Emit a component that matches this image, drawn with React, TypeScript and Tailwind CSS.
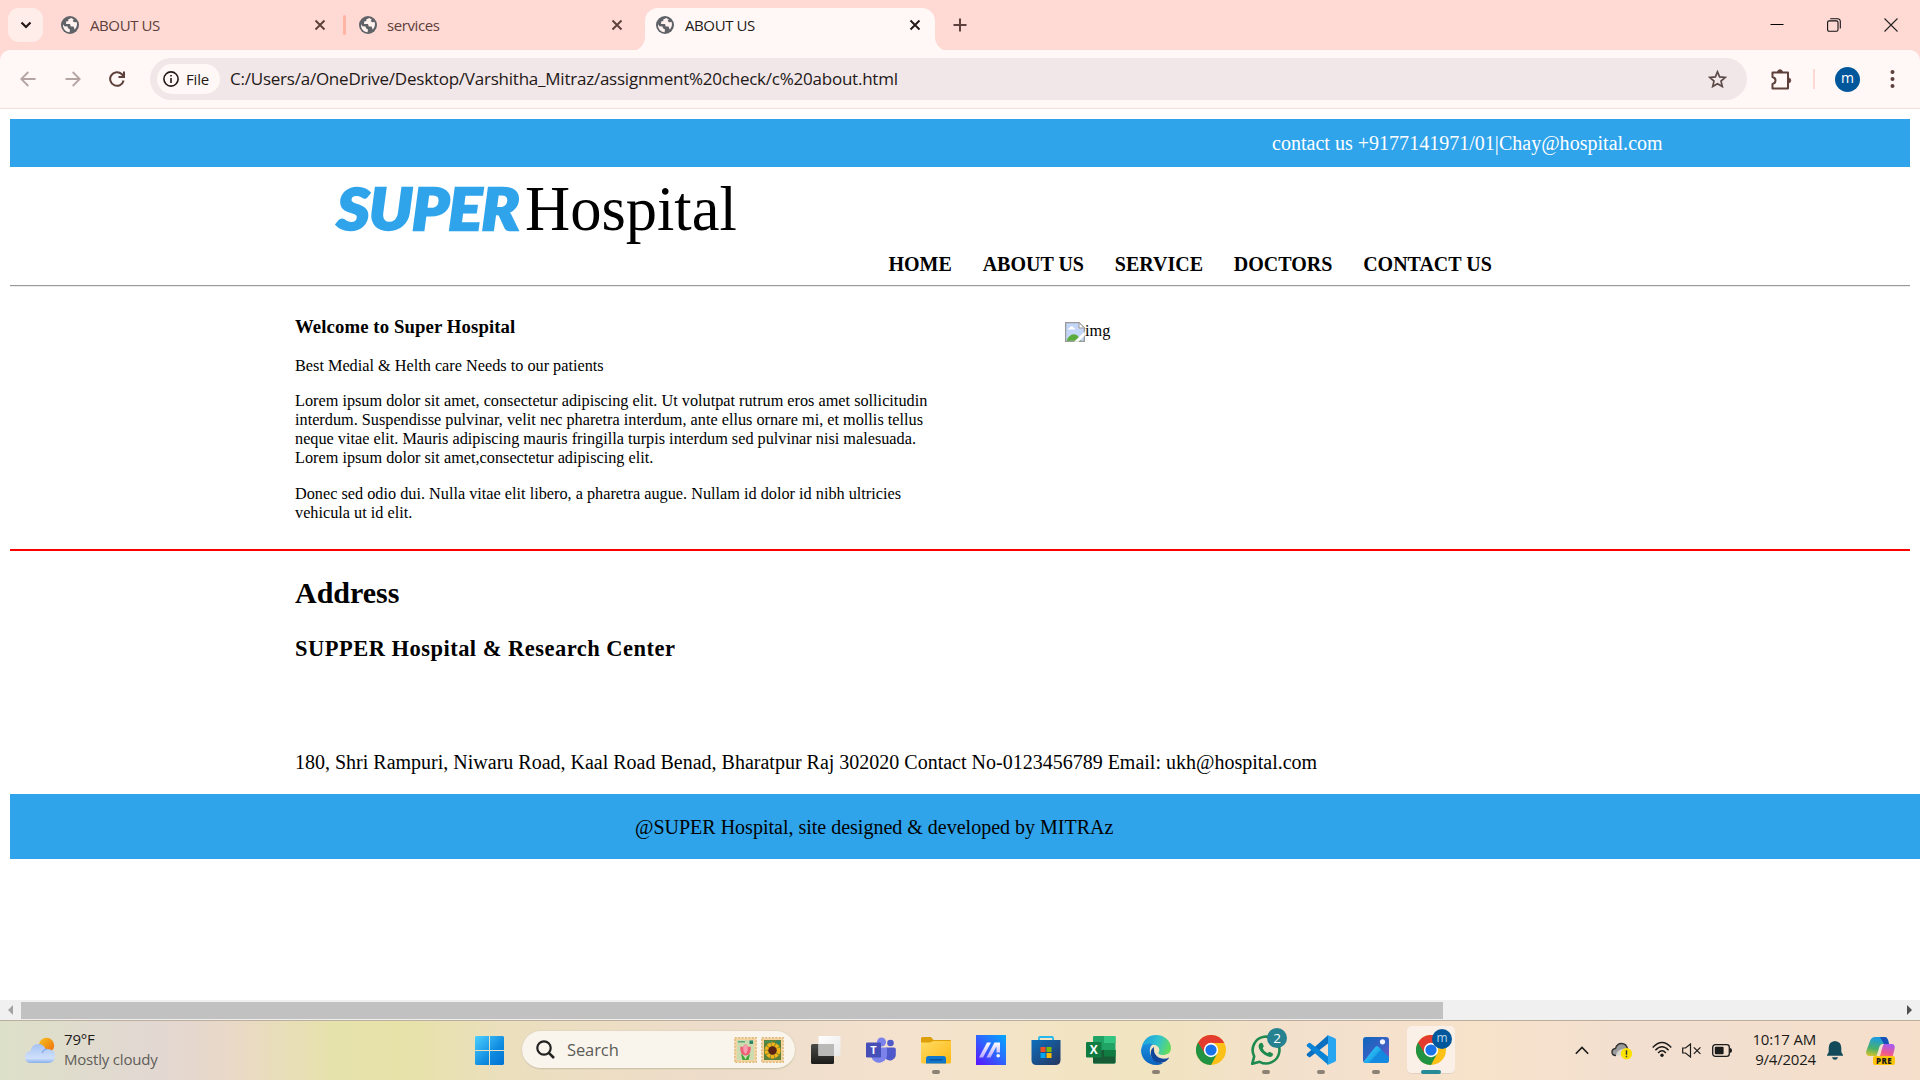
import React from "react";

function Globe() {
  return (
    <svg className="size-[18px] shrink-0" viewBox="0 0 18 18">
      <circle cx="9" cy="9" r="9" fill="#5f6368" />
      <path d="M2 8.2 C1.6 12.5 4.5 16 8.6 16.3 L9 13.6 L7 12.3 L6.6 10.6 L3.4 10.2 Z" fill="#fff2ef" />
      <path d="M10.2 1.9 L7.2 3.4 L7.4 5 L5.2 5.6 L5 8 L9 8.1 L9.8 10.4 L12.6 10.6 L13.6 13.4 C15.6 11.8 16.6 8.6 15.6 6 L13.2 6.2 L11.6 5 L12.8 3.4 Z" fill="#fff2ef" />
    </svg>
  );
}

function TabClose({ dark }: { dark?: boolean }) {
  return (
    <svg className="size-[12px] shrink-0" viewBox="0 0 12 12" fill="none" stroke={dark ? "#231917" : "#5d403b"} strokeWidth="1.9">
      <path d="M1.5 1.5 L10.5 10.5 M10.5 1.5 L1.5 10.5" />
    </svg>
  );
}

function TabStrip() {
  return (
    <div className="flex h-[50px] bg-[#ffdad4]">
      <div className="mt-2 ml-2 flex h-[34px] w-[35px] items-center justify-center rounded-[11px] bg-[#ffedea]">
        <svg className="h-[8px] w-[12px]" viewBox="0 0 12 8" fill="none" stroke="#231917" strokeWidth="2.2">
          <path d="M1.5 1.5 L6 6 L10.5 1.5" />
        </svg>
      </div>
      <div className="flex h-[50px] w-[303px] items-center pl-[18px]">
        <Globe />
        <span className="ml-[11px] w-[224px] shrink-0 text-[15px] tracking-[-0.4px] text-[#5d403b]">ABOUT US</span>
        <TabClose />
        <span className="ml-[17px] h-5 w-[3px] shrink-0 rounded bg-[#ffb4a6]" />
      </div>
      <div className="flex h-[50px] w-[299px] items-center pl-[13px]">
        <Globe />
        <span className="ml-[10px] w-[224px] text-[15px] tracking-[-0.4px] text-[#5d403b]">services</span>
        <TabClose />
      </div>
      <div className="relative mt-[7.5px] flex h-[43px] w-[290px] items-center rounded-t-[13px] bg-[#fff8f6] pl-[11px]">
        <svg className="absolute bottom-0 left-[-14px] size-[14px]" viewBox="0 0 14 14">
          <path d="M14 0 A14 14 0 0 1 0 14 H14Z" fill="#fff8f6" />
        </svg>
        <svg className="absolute right-[-14px] bottom-0 size-[14px]" viewBox="0 0 14 14">
          <path d="M0 0 A14 14 0 0 0 14 14 H0Z" fill="#fff8f6" />
        </svg>
        <div className="mb-2 flex items-center">
          <Globe />
          <span className="ml-[11px] w-[224px] text-[15px] tracking-[-0.4px] text-[#231917]">ABOUT US</span>
          <TabClose dark />
        </div>
      </div>
      <svg className="mt-[18px] ml-[18px] size-[14px]" viewBox="0 0 14 14" stroke="#5d403b" strokeWidth="2">
        <path d="M7 0.5 V13.5 M0.5 7 H13.5" />
      </svg>
      <div className="mr-[22px] ml-auto flex h-[50px] items-center gap-[43px]">
        <svg className="h-[14px] w-[14px]" viewBox="0 0 14 14" stroke="#000">
          <path d="M0.5 6.5 H13.5" />
        </svg>
        <svg className="h-[14px] w-[14px]" viewBox="0 0 14 14" fill="none" stroke="#111" strokeWidth="1.1">
          <rect x="0.6" y="2.9" width="10.4" height="10.4" rx="1.5" />
          <path d="M3.2 0.7 H10.5 A2.7 2.7 0 0 1 13.3 3.4 V10.5" />
        </svg>
        <svg className="h-[14px] w-[14px]" viewBox="0 0 14 14" stroke="#222" strokeWidth="1.1">
          <path d="M0.5 0.5 L13.5 13.5 M13.5 0.5 L0.5 13.5" />
        </svg>
      </div>
    </div>
  );
}

function Toolbar() {
  return (
    <div className="h-[59px] bg-[#ffdad4]">
      <div className="flex h-[59px] items-center rounded-t-[10px] border-b border-[#f8dcd8] bg-[#fff8f6]">
        <svg className="ml-5 size-4" viewBox="0 0 16 16" fill="none" stroke="#b5a5a2" strokeWidth="1.8">
          <path d="M15.5 8 H1.5 M8.3 1 L1.3 8 L8.3 15" />
        </svg>
        <svg className="ml-[29px] size-4" viewBox="0 0 16 16" fill="none" stroke="#b5a5a2" strokeWidth="1.8">
          <path d="M0.5 8 H14.5 M7.7 1 L14.7 8 L7.7 15" />
        </svg>
        <svg className="ml-[28px] size-4" viewBox="0 0 16 16" fill="none" stroke="#5d403b" strokeWidth="2">
          <path d="M14.6 9.5 A6.8 6.8 0 1 1 12.9 3.3 L14.3 4.8 M15 0.5 V6 H9.5" />
        </svg>
        <div className="ml-[25px] flex h-[42px] w-[1597px] items-center rounded-full bg-[#f1e6e8] pl-[7px]">
          <div className="flex h-[30px] w-[63px] items-center rounded-full bg-[#fff8f6] pl-[6px]">
            <svg className="size-4" viewBox="0 0 16 16" fill="none" stroke="#231917" strokeWidth="1.6">
              <circle cx="8" cy="8" r="7.1" />
              <path d="M8 7 V12 M8 4 V5.6" />
            </svg>
            <span className="ml-[7px] text-[15px] font-medium tracking-[-0.15px] text-[#231917]">File</span>
          </div>
          <span className="ml-[10px] text-[17px] tracking-[-0.23px] whitespace-nowrap text-[#231917]">
            C:/Users/a/OneDrive/Desktop/Varshitha_Mitraz/assignment%20check/c%20about.html
          </span>
          <svg className="mr-5 ml-auto size-[19px]" viewBox="0 0 19 19" fill="none" stroke="#5b4a48" strokeWidth="1.7">
            <path d="M9.5 1.8 L11.6 6.9 L17.2 7.4 L13 11.1 L14.3 16.6 L9.5 13.7 L4.7 16.6 L6 11.1 L1.8 7.4 L7.4 6.9 Z" />
          </svg>
        </div>
        <svg className="ml-6 h-[21px] w-[21px]" viewBox="0 0 21 21" fill="none" stroke="#5d403b" strokeWidth="2" strokeLinejoin="round">
          <path d="M1.5 3.5 H17 V19.5 H1.5 V15 C5.5 14 5.5 9 1.5 8 Z" />
          <path d="M6.5 3 A2.5 2.3 0 0 1 11.5 3 Z M17.5 9 A2.3 2.5 0 0 1 17.5 14 Z" fill="#5d403b" strokeWidth="0.8" />
        </svg>
        <span className="ml-[21px] h-5 w-[2px] bg-[#ffdad4]" />
        <span className="ml-5 flex size-[25px] items-center justify-center rounded-full bg-[#01579b] pb-[3px] text-[14px] text-white">m</span>
        <svg className="ml-[30px] h-[18px] w-[5px]" viewBox="0 0 5 18" fill="#5d403b">
          <circle cx="2.5" cy="2" r="2" />
          <circle cx="2.5" cy="9" r="2" />
          <circle cx="2.5" cy="16" r="2" />
        </svg>
      </div>
    </div>
  );
}

function BrokenImage() {
  return (
    <svg className="h-5 w-5" viewBox="0 0 20 20">
      <path d="M0.6 0.6 H14 L19.4 6 V19.4 H0.6 Z" fill="#c3d6f8" stroke="#9a9a9a" strokeWidth="1.3" />
      <path d="M14 0.6 V6 H19.4 Z" fill="#fff" stroke="#9a9a9a" />
      <path d="M3 7.5 Q3 5.8 5 5.6 Q6.5 2.8 8.6 5.4 Q10.3 5.8 10.3 7.5 Z" fill="#fff" />
      <path d="M1.5 18.8 Q5.5 9.5 12.5 13.5 L16 18.8 Z" fill="#5bab3c" />
      <path d="M9 19.8 L19.8 9.6 V13.6 L13.4 19.8 Z" fill="#fff" />
    </svg>
  );
}

const navItems = ["HOME", "ABOUT US", "SERVICE", "DOCTORS", "CONTACT US"];

function HospitalPage() {
  return (
    <div className="h-[891px] overflow-hidden bg-white pt-[10px] pl-[10px] font-['Liberation_Serif',serif] text-black">
      <div className="flex h-12 w-[1900px] items-center bg-[#2fa4eb] pl-[1262px] text-[20px] tracking-[0.02px] text-white">
        <span className="whitespace-nowrap">contact us +9177141971/01|Chay@hospital.com</span>
      </div>
      <div className="flex h-[84px] items-baseline pl-[327px] text-[62.5px] leading-[82px]">
        <span className="w-[188px] origin-left scale-x-110 font-['Forte','Lato',cursive] text-[57px] font-black tracking-[-0.5px] text-[#2fa4eb] italic [-webkit-text-stroke:2.5px_#2fa4eb] [stroke-linejoin:round]">SUPER</span>
        <span>Hospital</span>
      </div>
      <nav className="flex h-[35px] w-[1900px] gap-[30.8px] border-b border-[#999] pl-[878.5px] text-[20px] leading-[26px] font-bold">
        {navItems.map((n) => (
          <span key={n} className="whitespace-nowrap">{n}</span>
        ))}
      </nav>
      <div className="h-px w-[1900px] bg-[#ededed]" />
      <div className="flex h-[264px] w-[1900px] border-b-2 border-[#f00] pl-[285px]">
        <div className="w-[770px] text-[16.25px] leading-[19px] whitespace-nowrap">
          <h3 className="pt-[29px] text-[18.75px] leading-[22px] font-bold tracking-[0.1px]">Welcome to Super Hospital</h3>
          <p className="mt-[19px]">Best Medial &amp; Helth care Needs to our patients</p>
          <p className="mt-4">
            Lorem ipsum dolor sit amet, consectetur adipiscing elit. Ut volutpat rutrum eros amet sollicitudin<br />
            interdum. Suspendisse pulvinar, velit nec pharetra interdum, ante ellus ornare mi, et mollis tellus<br />
            neque vitae elit. Mauris adipiscing mauris fringilla turpis interdum sed pulvinar nisi malesuada.<br />
            Lorem ipsum dolor sit amet,consectetur adipiscing elit.
          </p>
          <p className="mt-[17px]">
            Donec sed odio dui. Nulla vitae elit libero, a pharetra augue. Nullam id dolor id nibh ultricies<br />
            vehicula ut id elit.
          </p>
        </div>
        <div className="flex h-5 pt-[35px] text-[16.25px] leading-[19px]">
          <BrokenImage />
          <span>img</span>
        </div>
      </div>
      <div className="h-[243px] pl-[285px] whitespace-nowrap">
        <h2 className="pt-[24px] text-[30px] leading-[35px] font-bold">Address</h2>
        <h3 className="mt-[26px] text-[22.5px] leading-[26px] font-bold tracking-[0.48px]">SUPPER Hospital &amp; Research Center</h3>
        <p className="mt-[89px] text-[20px] leading-[23px]">
          180, Shri Rampuri, Niwaru Road, Kaal Road Benad, Bharatpur Raj 302020 Contact No-0123456789 Email: ukh@hospital.com
        </p>
      </div>
      <div className="flex h-[65px] items-center bg-[#2fa4eb] pl-[625px] text-[20px]">
        <span>@SUPER Hospital, site designed &amp; developed by MITRAz</span>
      </div>
    </div>
  );
}

function HorizontalScrollbar() {
  return (
    <div className="flex h-[21px] items-center border-b border-[#bcae9c] bg-[#f0f0f0]">
      <svg className="ml-2 h-[10px] w-[5px]" viewBox="0 0 5 10"><path d="M5 0 V10 L0 5Z" fill="#a3a3a3" /></svg>
      <div className="ml-2 h-[17px] w-[1422px] bg-[#c1c1c1]" />
      <svg className="mr-2 ml-auto h-[10px] w-[5px]" viewBox="0 0 5 10"><path d="M0 0 V10 L5 5Z" fill="#505050" /></svg>
    </div>
  );
}

function ChromeLogo() {
  return (
    <svg className="size-[30px]" viewBox="0 0 30 30">
      <circle cx="15" cy="15" r="15" fill="#fbc116" />
      <path d="M15 15 L2 7.5 A15 15 0 0 0 15 30 L21.2 18.6 Z" fill="#229342" />
      <path d="M15 8 H28.3 A15 15 0 0 0 2 7.5 L8.8 18.5 Z" fill="#e33b2e" />
      <circle cx="15" cy="15" r="7.2" fill="#fff" />
      <circle cx="15" cy="15" r="5.6" fill="#1a73e8" />
    </svg>
  );
}

function TaskViewIcon() {
  return (
    <svg className="size-[30px]" viewBox="0 0 30 30">
      <defs>
        <linearGradient id="tvDark" x1="0" y1="0" x2="0" y2="1"><stop offset="0" stopColor="#4a4a48" /><stop offset="1" stopColor="#1c1c1a" /></linearGradient>
        <linearGradient id="tvLight" x1="0" y1="0" x2="1" y2="1"><stop offset="0" stopColor="#fff" /><stop offset="1" stopColor="#e8e8e8" /></linearGradient>
      </defs>
      <rect x="0" y="9" width="23" height="20" rx="1.5" fill="url(#tvDark)" />
      <rect x="7.5" y="1" width="22" height="20" rx="1" fill="url(#tvLight)" />
      <path d="M7.5 9 H23 V21 H7.5Z" fill="#b9b9b8" />
    </svg>
  );
}

function TeamsIcon() {
  return (
    <svg className="size-[30px]" viewBox="0 0 30 30">
      <circle cx="24.5" cy="8" r="3.3" fill="#5059c9" />
      <path d="M20 12.5 H28 Q29.8 12.5 29.8 14.3 V20 A6 6 0 0 1 20 24Z" fill="#5059c9" />
      <circle cx="15.5" cy="7" r="4.5" fill="#7b83eb" />
      <path d="M8 12.5 H21 V20.5 A8 8 0 0 1 5.5 22.5Z" fill="#7b83eb" />
      <rect x="0" y="7.5" width="15" height="15" rx="1.3" fill="#464eb8" />
      <text x="7.5" y="19" textAnchor="middle" fontFamily="Open Sans" fontWeight="700" fontSize="11" fill="#fff">T</text>
    </svg>
  );
}

function FolderIcon() {
  return (
    <svg className="size-[30px]" viewBox="0 0 30 30">
      <defs><linearGradient id="fld" x1="0" y1="0" x2="1" y2="1"><stop offset="0" stopColor="#ffdc63" /><stop offset="1" stopColor="#fdb813" /></linearGradient></defs>
      <path d="M0 3.5 Q0 2 1.5 2 H10 L12.5 5 H29 Q30 5 30 6 V9 H0Z" fill="#dea00a" />
      <path d="M0 7.5 H9 L12.5 6 H30 V27 Q30 28.5 28.5 28.5 H1.5 Q0 28.5 0 27Z" fill="url(#fld)" />
      <path d="M5 28.5 V23.5 Q5 21 7.5 21 H22.5 Q25 21 25 23.5 V28.5Z" fill="#1078cc" />
      <path d="M8.5 24.8 H21.5" stroke="#094f96" strokeWidth="1.3" />
    </svg>
  );
}

function AsusIcon() {
  return (
    <svg className="size-[30px]" viewBox="0 0 30 30">
      <defs>
        <linearGradient id="asus" x1="0" y1="1" x2="1" y2="0"><stop offset="0" stopColor="#5a12ff" /><stop offset="0.55" stopColor="#2a6cff" /><stop offset="1" stopColor="#00a8ff" /></linearGradient>
        <linearGradient id="asusW" x1="0" y1="1" x2="0" y2="0"><stop offset="0" stopColor="#b8a8ff" /><stop offset="1" stopColor="#fff" /></linearGradient>
      </defs>
      <rect width="30" height="30" fill="url(#asus)" />
      <path d="M3 22.5 L11 7.5 H15 L7 22.5Z M10.5 22.5 L18.5 7.5 H24 V17.5 H20.5 V11.5 L14.5 22.5Z" fill="url(#asusW)" />
      <circle cx="22.2" cy="20.8" r="1.8" fill="#fff" />
    </svg>
  );
}

function StoreIcon() {
  return (
    <svg className="size-[30px]" viewBox="0 0 30 30">
      <defs><linearGradient id="store" x1="0" y1="0" x2="1" y2="1"><stop offset="0" stopColor="#0d6fbd" /><stop offset="1" stopColor="#26355f" /></linearGradient></defs>
      <path d="M8 7 V3 Q8 2 9 2 H21 Q22 2 22 3 V7" fill="none" stroke="#25b7ee" strokeWidth="1.8" />
      <path d="M0.5 5 H29.5 V25 Q29.5 30 24.5 30 H5.5 Q0.5 30 0.5 25Z" fill="url(#store)" />
      <rect x="9.5" y="12" width="5" height="5" fill="#f25022" />
      <rect x="15.5" y="12" width="5" height="5" fill="#7fba00" />
      <rect x="9.5" y="18" width="5" height="5" fill="#00a4ef" />
      <rect x="15.5" y="18" width="5" height="5" fill="#ffb900" />
    </svg>
  );
}

function ExcelIcon() {
  return (
    <svg className="size-[30px]" viewBox="0 0 30 30">
      <rect x="7" y="1" width="22.5" height="27.5" rx="1.3" fill="#21a366" />
      <path d="M18 1 H28.2 Q29.5 1 29.5 2.3 V8 H18Z" fill="#33c481" />
      <path d="M7 15 H29.5 V27 Q29.5 28.5 28 28.5 H8.3 Q7 28.5 7 27Z" fill="#185c37" />
      <path d="M18 15 H29.5 V21.5 H18Z" fill="#107c41" />
      <rect x="0" y="7" width="15.5" height="15.5" rx="1.3" fill="#107c41" />
      <text x="7.7" y="19" textAnchor="middle" fontFamily="Open Sans" fontWeight="700" fontSize="12" fill="#fff">X</text>
    </svg>
  );
}

function EdgeIcon() {
  return (
    <svg className="size-[30px]" viewBox="0 0 30 30">
      <defs>
        <linearGradient id="edTop" x1="0" y1="0.3" x2="1" y2="0.6"><stop offset="0" stopColor="#1a9fe0" /><stop offset="0.5" stopColor="#2fc2cf" /><stop offset="1" stopColor="#66dd58" /></linearGradient>
        <linearGradient id="edLow" x1="0" y1="0" x2="0" y2="1"><stop offset="0" stopColor="#1b8fdd" /><stop offset="1" stopColor="#0b63bd" /></linearGradient>
      </defs>
      <path d="M0.5 13 C2 4.5 8 0 15 0 C24 0 30 6.5 30 13 C30 18 26 20 22 20 C18.5 20 17 18.8 17.5 17.8 C19.5 15 18 11 14 10 C9 8.5 3 10 0.5 13Z" fill="url(#edTop)" />
      <path d="M0 15 C1 9.5 7.5 7.5 12 9.2 C9 11 8 15 9.5 19.5 C11.5 25.5 17 28 22 28.3 C19 30 17 30 15 30 C6.5 30 0 23.5 0 15Z" fill="url(#edLow)" />
      <path d="M13 12 C8.5 14.5 9 21.5 12.8 25.5 C17.5 30 25.5 28 28.2 22.6 C22 25.8 11.5 22.5 13 12Z" fill="#10479a" />
    </svg>
  );
}

function WhatsAppIcon() {
  return (
    <span className="relative">
      <svg className="size-[30px]" viewBox="0 0 30 30">
        <path d="M1.2 28.8 L3.2 21.3 A13.4 13.4 0 1 1 8.6 26.8 Z" fill="none" stroke="#1f8a50" strokeWidth="2.6" strokeLinejoin="round" />
        <path d="M9 8.3 C10.3 7.2 11.3 7.6 11.8 8.8 L12.7 11 C13 12 11.6 12.8 11.8 13.4 C12.8 15.6 14.4 17.2 16.6 18 C17.3 18.2 18 16.6 18.9 16.9 L21.4 18.2 C22.6 18.9 22 20.4 21 21.3 C17.6 24 7.4 17 7.6 11.2 C7.7 10 8.2 8.9 9 8.3Z" fill="#1f8a50" />
      </svg>
      <span className="absolute top-[-7px] left-4 flex size-5 items-center justify-center rounded-full bg-[#268190] text-[13.5px] text-white">2</span>
    </span>
  );
}

function CodeIcon() {
  return (
    <svg className="size-[30px]" viewBox="0 0 30 30">
      <path d="M22 0.3 L1 18.8 Q0.2 19.6 1 20.4 L2.8 22 Q3.5 22.5 4.3 22 L22 8.5Z" fill="#0a6fc0" />
      <path d="M22 29.7 L1 11.2 Q0.2 10.4 1 9.6 L2.8 8 Q3.5 7.5 4.3 8 L22 21.5Z" fill="#0b84d8" />
      <path d="M21.5 0 L29 3.3 Q30 3.8 30 5 V25 Q30 26.2 29 26.7 L21.5 30 Q20.5 29.5 22 28 V2 Q20.5 0.5 21.5 0Z" fill="#27a5f0" />
    </svg>
  );
}

function PhotosIcon() {
  return (
    <svg className="size-[26px]" viewBox="0 0 26 26">
      <defs>
        <linearGradient id="phBg" x1="0" y1="0" x2="1" y2="1"><stop offset="0" stopColor="#0f66bd" /><stop offset="0.6" stopColor="#3d60c4" /><stop offset="1" stopColor="#8a50c4" /></linearGradient>
        <linearGradient id="phFg" x1="0" y1="0" x2="1" y2="1"><stop offset="0" stopColor="#3edbff" /><stop offset="1" stopColor="#0a84dc" /></linearGradient>
      </defs>
      <rect width="26" height="26" rx="3" fill="url(#phBg)" />
      <path d="M1 25 L12 10.5 Q14 8 16.2 10.5 L26 20 V23 Q26 26 23 26 H3 Q1.7 26 1 25Z" fill="#1389e0" />
      <path d="M0.6 24.5 L12 10.5 Q14 8 16.2 10.5 L18 12.4 L6 26 H3 Q1.2 26 0.6 24.5Z" fill="url(#phFg)" />
      <circle cx="19.5" cy="4.8" r="2.6" fill="#f4f4ff" />
    </svg>
  );
}

function Stamp({ sun }: { sun?: boolean }) {
  return (
    <svg className="h-[26px] w-[23px]" viewBox="0 0 23 26">
      <rect x="0.8" y="0.8" width="21.4" height="24.4" fill="#f3d4a0" stroke="#e0b87c" strokeWidth="1.4" strokeDasharray="2 1.4" />
      <rect x="3" y="3" width="17" height="20" fill={sun ? "#5d8038" : "#cddcb0"} />
      <path d="M4 4.8 H11" stroke="#3f9a6a" strokeWidth="1.2" />
      <rect x="15.5" y="3.5" width="3.5" height="3.5" fill="#2d8467" />
      {sun ? (
        <>
          <circle cx="11.5" cy="13.5" r="6" fill="none" stroke="#f5b31a" strokeWidth="4" strokeDasharray="3.2 0.6" />
          <circle cx="11.5" cy="13.5" r="4.2" fill="#5a2414" />
        </>
      ) : (
        <>
          <path d="M7 17 Q9.5 18 11.5 22.5 Q13.5 18 16 17 L14.5 23 H8.5Z" fill="#3fa535" />
          <path d="M6.3 9.5 L8.5 10 L11.5 7 L14.5 10 L16.7 9.5 Q17.5 18.5 11.5 18.5 Q5.5 18.5 6.3 9.5Z" fill="#ee5f78" />
          <path d="M9.2 10 L11.5 7 L13.8 10 Q14 15 11.5 17 Q9 15 9.2 10Z" fill="#f9a0ae" />
        </>
      )}
    </svg>
  );
}

const apps: { name: string; icon: React.ReactNode; open?: boolean }[] = [
  { name: "taskview", icon: <TaskViewIcon /> },
  { name: "teams", icon: <TeamsIcon /> },
  { name: "files", icon: <FolderIcon />, open: true },
  { name: "asus", icon: <AsusIcon /> },
  { name: "store", icon: <StoreIcon /> },
  { name: "excel", icon: <ExcelIcon /> },
  { name: "edge", icon: <EdgeIcon />, open: true },
  { name: "chrome", icon: <ChromeLogo /> },
  { name: "whatsapp", icon: <WhatsAppIcon />, open: true },
  { name: "code", icon: <CodeIcon />, open: true },
  { name: "photos", icon: <PhotosIcon />, open: true },
];

function Taskbar() {
  return (
    <div className="flex h-[59px] bg-[linear-gradient(90deg,#dde0c8_0px,#e2d8d2_150px,#e5d7cd_195px,#ead9c6_235px,#e6e2ac_330px,#e6e2a8_400px,#ebdfbd_500px,#eedccb_720px,#f4e2cf_900px,#f2e4c4_1050px,#f1e4c0_1150px,#f3e0cd_1310px,#f7e2ca_1480px,#f2dfd0_1640px,#f5dfcb_1920px)]">
      <div className="flex w-[475px] items-start pl-[25px]">
        <svg className="mt-[16px] h-[26px] w-[30px]" viewBox="0 0 30 26">
          <defs>
            <linearGradient id="sunG" x1="0" y1="0" x2="1" y2="1"><stop offset="0" stopColor="#f7c21e" /><stop offset="1" stopColor="#ee6a0c" /></linearGradient>
            <linearGradient id="cloudG" x1="0" y1="0" x2="0" y2="1"><stop offset="0" stopColor="#a6c2f4" /><stop offset="0.75" stopColor="#cfe0fa" /><stop offset="1" stopColor="#88aeee" /></linearGradient>
          </defs>
          <circle cx="21.5" cy="8.5" r="7.7" fill="url(#sunG)" />
          <path d="M5.5 14 Q6.5 7 13.5 7 Q18.5 7 20.5 12 Q30 11.5 30 18.5 Q30 26 23 26 H6.5 Q0 26 0 20 Q0 15 5.5 14Z" fill="url(#cloudG)" />
          <path d="M17 16 Q19 12 22 12.2" stroke="#85a6e6" strokeWidth="1.2" fill="none" />
        </svg>
        <div className="mt-[8px] ml-[9px] text-[15px] leading-5 tracking-[-0.2px]">
          <div className="text-[#1b1b1a]">79°F</div>
          <div className="text-[#5f5d58]">Mostly cloudy</div>
        </div>
      </div>
      <svg className="mt-[15px] size-[29px]" viewBox="0 0 29 29">
        <defs><linearGradient id="win" x1="0" y1="0" x2="1" y2="1"><stop offset="0" stopColor="#4cd0ff" /><stop offset="0.6" stopColor="#0f8be0" /><stop offset="1" stopColor="#0272d2" /></linearGradient></defs>
        <path d="M1 0 H14 V14 H0 V1Z M15 0 H28 L29 1 V14 H15Z M0 15 H14 V29 H1 L0 28Z M15 15 H29 V28 L28 29 H15Z" fill="url(#win)" />
      </svg>
      <div className="mt-[10px] ml-[18px] flex h-[38px] w-[273px] items-center rounded-full border-b border-[#cfc3a8] bg-[#f9f5ec] pl-[14px] shadow-[0_0_0_1px_#e2d8c0]">
        <svg className="size-[19px]" viewBox="0 0 19 19" fill="none" stroke="#222" strokeWidth="2.2">
          <circle cx="8" cy="8" r="6.7" />
          <path d="M12.8 12.8 L18 18" strokeWidth="2.6" />
        </svg>
        <span className="ml-3 pt-px text-[16.5px] tracking-[-0.1px] text-[#5c5b57]">Search</span>
        <span className="mr-[11px] ml-auto flex gap-[4px]">
          <Stamp />
          <Stamp sun />
        </span>
      </div>
      <div className="ml-[3.5px] flex">
        {apps.map((a) => (
          <div key={a.name} className="relative flex w-[55px] justify-center pt-[14px]">
            <span className="flex h-[30px] items-center">{a.icon}</span>
            {a.open && <span className="absolute bottom-[6px] left-[23.5px] h-1 w-2 rounded-full bg-[#8b8274]" />}
          </div>
        ))}
        <div className="relative mt-[5px] ml-[3.5px] flex h-12 w-12 justify-center rounded-[5px] border-b border-[#e3d2c4] bg-[#fbf0e8] pt-[9px]">
          <ChromeLogo />
          <span className="absolute top-[3px] right-[3px] flex size-5 items-center justify-center rounded-full bg-[#01579b] pb-[2px] text-[12px] text-[#b8d3ea]">m</span>
          <span className="absolute bottom-[-1px] left-[14px] h-1 w-5 rounded-full bg-[#268a97]" />
        </div>
      </div>
      <div className="mr-[25px] ml-auto flex items-start">
        <svg className="mt-[25px] h-[9px] w-[14px]" viewBox="0 0 14 9" fill="none" stroke="#1b1b1a" strokeWidth="1.6"><path d="M0.8 7.8 L7 1.5 L13.2 7.8" /></svg>
        <svg className="mt-[21px] ml-[22px] h-[18px] w-[22px]" viewBox="0 0 22 18">
          <path d="M5 13.5 Q1 13.5 1 10 Q1 7 4.5 6.5 Q6 1.5 10.5 1.5 Q15.5 1.5 16.5 7" fill="#9b9b9b" stroke="#333" strokeWidth="1.4" />
          <path d="M5 13.5 Q6 7 14 6.5 V13.5Z" fill="#d8d5d0" />
          <circle cx="15.5" cy="11.8" r="5.7" fill="#fbe200" />
          <path d="M15.5 8.3 V12.7 M15.5 13.8 V15.3" stroke="#333" strokeWidth="1.4" />
        </svg>
        <svg className="mt-[20px] ml-[19px] h-[17px] w-[20px]" viewBox="0 0 20 17" fill="none" stroke="#1b1b1a" strokeWidth="1.4">
          <path d="M0.7 6.5 Q10 -3.5 19.3 6.5 M3.4 9.2 Q10 2.2 16.6 9.2 M6.1 11.9 Q10 7.7 13.9 11.9" />
          <circle cx="10" cy="14.2" r="1.7" fill="#1b1b1a" stroke="none" />
        </svg>
        <svg className="mt-[22px] ml-[10px] h-[15px] w-[19px]" viewBox="0 0 19 15" fill="none" stroke="#1b1b1a" strokeWidth="1.2">
          <path d="M0.7 5 H3.5 L8.5 1 V14 L3.5 10 H0.7Z" />
          <path d="M11.8 4.3 L18.4 10.9 M18.4 4.3 L11.8 10.9" />
        </svg>
        <svg className="mt-[23px] ml-[11px] h-[13px] w-[20px]" viewBox="0 0 20 13">
          <rect x="0.7" y="0.7" width="16.6" height="11.6" rx="2.6" fill="none" stroke="#1b1b1a" strokeWidth="1.3" />
          <rect x="2.8" y="2.8" width="8.8" height="7.4" rx="1" fill="#1b1b1a" />
          <path d="M18 4.2 H18.8 Q20 4.6 20 6.5 Q20 8.4 18.8 8.8 H18Z" fill="#1b1b1a" />
        </svg>
        <div className="mt-[8px] ml-[20px] w-[64px] text-right text-[15px] leading-5 tracking-[-0.2px] whitespace-nowrap text-[#1b1b1a]">
          <div>10:17 AM</div>
          <div>9/4/2024</div>
        </div>
        <svg className="mt-[20px] ml-[11px] h-[19px] w-[16px]" viewBox="0 0 16 19" fill="#134a5a">
          <path d="M8 0 Q14.3 0.6 14.3 7 V11 L16 14 V14.8 H0 V14 L1.7 11 V7 Q1.7 0.6 8 0Z M5 16.3 H11 Q10.3 18.8 8 18.8 Q5.7 18.8 5 16.3Z" />
        </svg>
        <div className="relative mt-4 ml-[23px] h-7 w-[29px]">
          <svg className="h-[22px] w-[29px]" viewBox="0 0 29 22">
            <defs>
              <linearGradient id="cpL" x1="0.4" y1="0" x2="0.2" y2="1"><stop offset="0" stopColor="#1a9be8" /><stop offset="0.6" stopColor="#49b06a" /><stop offset="1" stopColor="#d8c32a" /></linearGradient>
              <linearGradient id="cpR" x1="0.6" y1="0" x2="0.3" y2="1"><stop offset="0" stopColor="#a75bf0" /><stop offset="0.6" stopColor="#f0588c" /><stop offset="1" stopColor="#ff9340" /></linearGradient>
            </defs>
            <path d="M9 0 H19 Q21 0 22 3 L23 7 H17 Q14 7 13 11 L10.5 19 H3.5 Q-0.5 19 0.3 14 L4 4 Q5.5 0 9 0Z" fill="url(#cpL)" />
            <path d="M14 0 H19 Q21 0 22 3 L23 7 H18Z" fill="#1751b8" />
            <path d="M18 7 H26 Q29.5 7.5 28.5 12 L26 22 H11 Q13.5 21 14.3 18 L16.5 10 Q17 7.8 18 7Z" fill="url(#cpR)" />
          </svg>
          <span className="absolute bottom-0 left-[7px] flex h-[9px] w-[22px] items-center justify-center rounded-[2px] bg-[#fdc60a] text-[8px] font-extrabold tracking-[0.4px] text-[#1b1b1a]">PRE</span>
        </div>
      </div>
    </div>
  );
}

export default function App() {
  return (
    <div className="flex h-[1080px] w-[1920px] flex-col overflow-hidden bg-white font-['Open_Sans','Noto_Sans',sans-serif]">
      <TabStrip />
      <Toolbar />
      <HospitalPage />
      <HorizontalScrollbar />
      <Taskbar />
    </div>
  );
}
